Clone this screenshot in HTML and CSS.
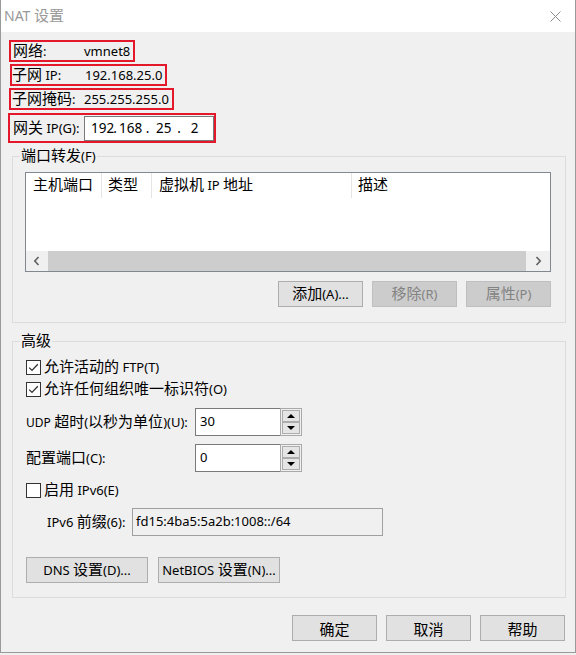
FILE: index.html
```html
<!DOCTYPE html>
<html lang="zh-CN">
<head>
<meta charset="utf-8">
<title>NAT 设置</title>
<link rel="stylesheet" href="styles.css">
</head>
<body>
<div class="window">
  <div class="titlebar">
    <span class="title"><span class="t-lat">NAT</span> <span class="zh">设置</span></span>
    <svg class="close" width="11" height="11" viewBox="0 0 11 11"><path d="M0.5 0.5 L10.5 10.5 M10.5 0.5 L0.5 10.5" stroke="#8a8a8a" stroke-width="1" fill="none"/></svg>
  </div>
  <div class="client">
    <div class="info">
      <div class="hl r1"><span class="lbl"><span class="zh">网络</span>:</span><span>vmnet8</span></div>
      <div class="hl r2"><span class="lbl"><span class="zh">子网</span> IP:</span><span>192.168.25.0</span></div>
      <div class="hl r3"><span class="lbl"><span class="zh">子网掩码</span>:</span><span>255.255.255.0</span></div>
      <div class="hl r4"><span class="lbl"><span class="zh">网关</span> IP(G):</span>
        <div class="ipbox">
          <span class="f f1">192</span><span class="dot d1">.</span><span class="f f2">168</span><span class="dot d2">.</span><span class="f f3">25</span><span class="dot d3">.</span><span class="f f4">2</span>
        </div>
      </div>
    </div>

    <fieldset class="group g1">
      <legend><span class="zh">端口转发</span>(F)</legend>
      <div class="gb-body g1-body">
        <div class="listview">
          <div class="lv-head">
            <div class="col c1"><span class="zh">主机端口</span></div>
            <div class="col c2"><span class="zh">类型</span></div>
            <div class="col c3"><span class="zh">虚拟机</span> IP <span class="zh">地址</span></div>
            <div class="col c4"><span class="zh">描述</span></div>
          </div>
          <div class="lv-body"></div>
          <div class="hscroll">
            <div class="sb-btn sb-left"><svg width="8" height="10" viewBox="0 0 8 10"><path d="M5.5 1 L1.8 5 L5.5 9" stroke="#606060" stroke-width="1.6" fill="none"/></svg></div>
            <div class="sb-thumb"></div>
            <div class="sb-btn sb-right"><svg width="8" height="10" viewBox="0 0 8 10"><path d="M2.5 1 L6.2 5 L2.5 9" stroke="#606060" stroke-width="1.6" fill="none"/></svg></div>
          </div>
        </div>
        <div class="btn-row">
          <div class="btn"><span><span class="zh">添加</span>(A)...</span></div>
          <div class="btn disabled"><span><span class="zh">移除</span>(R)</span></div>
          <div class="btn disabled"><span><span class="zh">属性</span>(P)</span></div>
        </div>
      </div>
    </fieldset>

    <fieldset class="group g2">
      <legend><span class="zh">高级</span></legend>
      <div class="gb-body g2-body">
        <div class="cb-row">
          <span class="cb"><svg width="13" height="13" viewBox="0 0 13 13"><path d="M2.2 6.6 L5 9.4 L10.8 3.2" stroke="#333" stroke-width="1.3" fill="none"/></svg></span>
          <span class="cb-lbl"><span class="zh">允许活动的</span> FTP(T)</span>
        </div>
        <div class="cb-row">
          <span class="cb"><svg width="13" height="13" viewBox="0 0 13 13"><path d="M2.2 6.6 L5 9.4 L10.8 3.2" stroke="#333" stroke-width="1.3" fill="none"/></svg></span>
          <span class="cb-lbl"><span class="zh">允许任何组织唯一标识符</span>(O)</span>
        </div>
        <div class="field-row udp-row">
          <span class="f-lbl"><span class="sm">UDP</span> <span class="zh">超时</span>(<span class="zh">以秒为单位</span>)(U):</span>
          <div class="spin">
            <div class="spin-field">30</div>
            <div class="spin-ctl">
              <div class="spin-btn"><span class="tri-up"></span></div>
              <div class="spin-btn"><span class="tri-down"></span></div>
            </div>
          </div>
        </div>
        <div class="field-row port-row">
          <span class="f-lbl"><span class="zh">配置端口</span>(C):</span>
          <div class="spin">
            <div class="spin-field">0</div>
            <div class="spin-ctl">
              <div class="spin-btn"><span class="tri-up"></span></div>
              <div class="spin-btn"><span class="tri-down"></span></div>
            </div>
          </div>
        </div>
        <div class="cb-row cb3">
          <span class="cb"></span>
          <span class="cb-lbl"><span class="zh">启用</span> IPv6(E)</span>
        </div>
        <div class="field-row v6-row">
          <span class="v6-lbl">IPv6 <span class="zh">前缀</span>(6):</span>
          <div class="v6-box">fd15:4ba5:5a2b:1008::/64</div>
        </div>
        <div class="dns-row">
          <div class="btn wide"><span>DNS <span class="zh">设置</span>(D)...</span></div>
          <div class="btn wide"><span>NetBIOS <span class="zh">设置</span>(N)...</span></div>
        </div>
      </div>
    </fieldset>

    <div class="footer">
      <div class="btn"><span class="zh">确定</span></div>
      <div class="btn"><span class="zh">取消</span></div>
      <div class="btn"><span class="zh">帮助</span></div>
    </div>
  </div>
</div>
</body>
</html>
```
FILE: styles.css
```css
* { box-sizing: border-box; }
html, body { margin: 0; padding: 0; }
body {
  width: 576px;
  height: 655px;
  overflow: hidden;
  background: #f0f0f0;
  font-family: "Noto Sans", "Noto Sans CJK SC", sans-serif;
  font-size: 13px;
  line-height: 18px;
  color: #000;
}
.zh {
  font-family: "Noto Sans CJK SC", sans-serif;
  font-size: 15px;
  line-height: 15px;
}
.sm { font-size: 12px; }

.window {
  width: 576px;
  height: 653px;
  background: #f0f0f0;
  border-left: 1px solid #9a9a9a;
  border-right: 1px solid #9a9a9a;
  border-bottom: 1px solid #9a9a9a;
  display: flex;
  flex-direction: column;
}

.titlebar {
  height: 32px;
  flex: none;
  background: #fff;
  display: flex;
  align-items: center;
  padding-left: 3px;
  color: #999;
}
.title { font-size: 14px; line-height: 20px; }
.t-lat { font-size: 14px; }
.close { margin-left: auto; margin-right: 14px; }

.client { flex: 1; padding-top: 8px; }

.info { display: flex; flex-direction: column; align-items: flex-start; }
.hl {
  display: flex;
  align-items: center;
  height: 22px;
  border: 2px solid #e3192b;
  padding-right: 3px;
}
.lbl { white-space: nowrap; }
.r1 { margin-left: 8px; padding-left: 2px; }
.r1 .lbl { width: 71px; }
.r2 { margin-top: 2px; margin-left: 9px; padding-left: 0; }
.r2 .lbl { width: 73px; }
.r3 { margin-top: 2px; margin-left: 8px; padding-left: 1px; }
.r3 .lbl { width: 72px; }
.r4 { margin-top: 3px; margin-left: 7px; padding-left: 3px; height: 30px; padding-right: 0; }
.r4 .lbl { width: 71px; }

.ipbox {
  width: 130px;
  height: 25px;
  border: 1px solid #7a7a7a;
  background: #fff;
  display: flex;
  align-items: center;
  padding-left: 6px;
  font-size: 13.5px;
}
.ipbox .f { display: block; }
.ipbox .dot { display: block; text-align: center; }
.f1 { width: 20px; }
.d1 { width: 8px; }
.f2 { width: 20px; }
.d2 { width: 17px; }
.f3 { width: 13px; }
.d3 { width: 20px; }
.f4 { width: 11px; text-align: center; }

.group {
  margin: 4px 9px 0 11px;
  padding: 0;
  border: 1px solid #dcdcdc;
  min-width: 0;
}
.group legend {
  margin-left: 7px;
  padding: 0 1px;
  height: 19px;
  line-height: 19px;
}
.g2 { margin-top: 9px; }

.g1-body { padding: 6px 14px 15px 12px; }

.listview {
  height: 100px;
  border: 1px solid #828790;
  background: #fff;
  display: flex;
  flex-direction: column;
}
.lv-head { height: 25px; display: flex; flex: none; line-height: 24px; }
.col { border-right: 1px solid #e5e5e5; white-space: nowrap; }
.c1 { width: 76px; padding-left: 7px; }
.c2 { width: 50px; padding-left: 6px; }
.c3 { width: 200px; padding-left: 7px; }
.c4 { flex: 1; padding-left: 6px; border-right: none; }
.lv-body { flex: 1; }
.hscroll { height: 20px; display: flex; flex: none; }
.sb-btn { background: #f0f0f0; display: flex; align-items: center; justify-content: center; }
.sb-left { width: 22px; }
.sb-right { width: 24px; }
.sb-thumb { flex: 1; background: #cdcdcd; }

.btn-row { margin-top: 9px; display: flex; justify-content: flex-end; gap: 9px; }
.btn {
  width: 85px;
  height: 26px;
  border: 1px solid #adadad;
  background: #e1e1e1;
  display: flex;
  align-items: center;
  justify-content: center;
  white-space: nowrap;
}
.btn.disabled { background: #cccccc; border-color: #bfbfbf; color: #838383; }
.btn.wide { width: 122px; }

.g2-body { padding: 5px 14px 14px 13px; }
.cb-row { height: 22px; display: flex; align-items: center; }
.cb {
  width: 15px;
  height: 15px;
  border: 1px solid #333;
  background: #fff;
  margin-right: 3px;
  display: flex;
  align-items: center;
  justify-content: center;
}
.cb-lbl { white-space: nowrap; }
.field-row { display: flex; align-items: center; height: 28px; }
.udp-row { margin-top: 8px; }
.port-row { margin-top: 8px; }
.cb3 { margin-top: 7px; }
.v6-row { margin-top: 7px; }
.f-lbl { width: 169px; white-space: nowrap; }
.spin { display: flex; height: 28px; }
.spin-field {
  width: 85px;
  height: 28px;
  border: 1px solid #7a7a7a;
  border-right: none;
  background: #fff;
  padding: 3px 0 0 4px;
}
.spin-ctl {
  width: 22px;
  height: 28px;
  border: 1px solid #a9a9a9;
  background: #f0f0f0;
  padding: 1px;
  display: flex;
  flex-direction: column;
}
.spin-btn {
  flex: 1;
  border: 1px solid #adadad;
  background: #e5e5e5;
  display: flex;
  align-items: center;
  justify-content: center;
}
.tri-up { width: 0; height: 0; border-left: 4px solid transparent; border-right: 4px solid transparent; border-bottom: 4px solid #000; }
.tri-down { width: 0; height: 0; border-left: 4px solid transparent; border-right: 4px solid transparent; border-top: 4px solid #000; }

.v6-lbl { width: 106px; padding-left: 21px; white-space: nowrap; }
.v6-box {
  width: 251px;
  height: 28px;
  border: 1px solid #a0a0a0;
  background: #f0f0f0;
  padding: 3px 0 0 3px;
}
.dns-row { margin-top: 21px; display: flex; gap: 10px; }

.footer { margin-top: 17px; display: flex; justify-content: flex-end; gap: 9px; padding-right: 10px; }
```
